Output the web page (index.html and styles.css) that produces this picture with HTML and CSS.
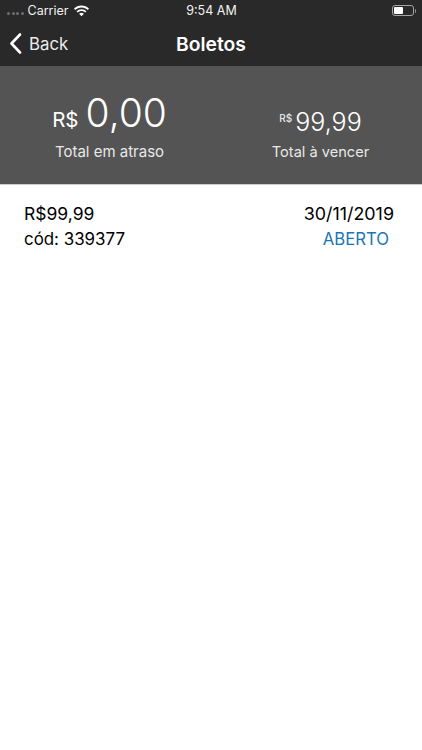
FILE: index.html
```html
<!DOCTYPE html>
<html lang="pt">
<head>
<meta charset="utf-8">
<title>Boletos</title>
<link rel="stylesheet" href="styles.css">
</head>
<body>
<header class="bar">
  <div class="status">
    <div class="status-left">
      <span class="dots"><i></i><i></i><i></i><i></i></span>
      <span class="carrier">Carrier</span>
      <svg class="wifi" width="17" height="12" viewBox="0 0 17 12"><path fill="#fff" d="M8.5 2.4c2.4 0 4.6.9 6.3 2.5l1.2-1.3C14 1.7 11.3.6 8.5.6S3 1.700 1 3.600l1.200 1.300C3.900 3.300 6.100 2.400 8.500 2.400zm0 3.600c1.400 0 2.700.5 3.700 1.500l1.300-1.300C12.100 4.900 10.400 4.200 8.500 4.200s-3.600.7-5 2l1.300 1.300C5.800 6.500 7.100 6 8.500 6zm0 1.800c-.9 0-1.700.3-2.400.9l2.400 2.600 2.400-2.600c-.7-.6-1.500-.9-2.400-.9z"/></svg>
    </div>
    <span class="clock">9:54 AM</span>
    <div class="battery"><span class="battery-body"><span class="battery-fill"></span></span><span class="battery-cap"></span></div>
  </div>
  <nav class="nav">
    <a class="back">
      <svg width="13" height="21" viewBox="0 0 13 21"><path d="M11 1.500 2.500 10.500 11 19.500" fill="none" stroke="#fff" stroke-width="2.600" stroke-linecap="round" stroke-linejoin="round"/></svg>
      <span>Back</span>
    </a>
    <h1 class="title">Boletos</h1>
  </nav>
</header>
<section class="summary">
  <div class="total total-late">
    <div class="amount"><span class="cur-lg">R$</span><span class="val-lg">0,00</span></div>
    <div class="label">Total em atraso</div>
  </div>
  <div class="total total-due">
    <div class="amount amount-due"><span class="cur-sm">R$</span><span class="val-sm">99,99</span></div>
    <div class="label">Total à vencer</div>
  </div>
</section>
<main class="list">
  <article class="row">
    <div class="col">
      <div class="line price">R$99,99</div>
      <div class="line code">cód: 339377</div>
    </div>
    <div class="col col-right">
      <div class="line date">30/11/2019</div>
      <div class="line state">ABERTO</div>
    </div>
  </article>
</main>
</body>
</html>
```

FILE: styles.css
```css
* { box-sizing: border-box; }
html, body { margin: 0; height: 100%; }
body {
  width: 422px;
  height: 750px;
  overflow: hidden;
  background: #fff;
  font-family: Inter, "Liberation Sans", sans-serif;
  display: flex;
  flex-direction: column;
}
.bar { height: 66px; background: #292929; color: #fff; flex: none; }
.status {
  height: 21px;
  padding: 0 6px 0 7px;
  display: grid;
  grid-template-columns: 1fr auto 1fr;
  align-items: center;
  font-size: 12.500px;
  color: #f2f2f2;
}
.status-left { display: flex; align-items: center; }
.dots { display: flex; gap: 1.500px; margin-right: 4px; padding-top: 5px; }
.dots i { width: 3px; height: 3px; border-radius: 50%; background: #6e6e6e; }
.carrier { margin-right: 5px; }
.wifi { display: block; }
.battery { justify-self: end; display: flex; align-items: center; }
.battery-body {
  width: 22px; height: 11px;
  border: 1px solid #a5a5a5;
  border-radius: 3px;
  padding: 1px;
  display: block;
}
.battery-fill { display: block; width: 9px; height: 7px; background: #fff; border-radius: 1px; }
.battery-cap { width: 1.500px; height: 4px; background: #8c8c8c; margin-left: 1px; border-radius: 0 1px 1px 0; }
.nav {
  height: 45px;
  display: flex;
  align-items: center;
  justify-content: center;
  position: relative;
}
.back {
  position: absolute;
  left: 9px;
  top: 12px;
  display: flex;
  align-items: center;
  gap: 7px;
  font-size: 16.800px;
  color: #ececec;
}
.back svg { display: block; }
.title { margin: 0; font-size: 19.300px; font-weight: 600; color: #fff; }
.summary {
  height: 119px;
  background: #545454;
  color: #fff;
  flex: none;
  display: grid;
  grid-template-columns: 219px 1fr;
  padding-top: 23px;
  border-bottom: 1px solid #ccc;
}
.total { display: flex; flex-direction: column; align-items: center; }
.amount { height: 47px; display: flex; align-items: baseline; justify-content: center; }
.amount-due { padding-top: 14px; height: 53px; }
.cur-lg { font-size: 20.500px; margin-right: 7px; color: #fff; }
.val-lg { font-size: 39px; font-weight: 300; line-height: 47px; }
.cur-sm { font-size: 10px; margin-right: 3px; position: relative; top: -9px; color: #e8e8e8; font-weight: 500; }
.val-sm { font-size: 25px; font-weight: 300; line-height: 39px; }
.label { font-size: 14.600px; color: #e8e8e8; margin-top: 7px; line-height: 18px; }
.total-due .label { margin-top: 1px; }
.total-late .label { font-size: 15px; }
.list { flex: 1; padding: 17px 28px 0 24px; }
.row { display: flex; justify-content: space-between; color: #000; }
.col { display: flex; flex-direction: column; gap: 5px; }
.col-right { align-items: flex-end; }
.line { line-height: 21px; }
.price { font-size: 17.500px; margin-top: 1px; }
.code { font-size: 16.900px; }
.date { font-size: 17.900px; margin-top: 1px; }
.state { font-size: 16.700px; color: #1a75b8; margin-right: 5px; }
```
